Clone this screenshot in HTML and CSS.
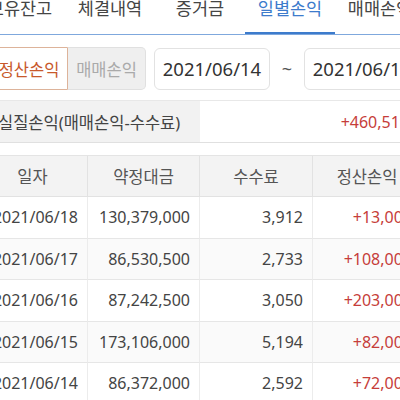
FILE: index.html
```html
<!DOCTYPE html>
<html lang="ko">
<head>
    <meta charset="UTF-8">
    <meta name="viewport" content="width=device-width, initial-scale=1.0">
    <title>일별손익</title>
    <link rel="stylesheet" href="styles.css">
</head>
<body>
    <div class="page">
        <!-- Tabs -->
        <div class="tabs">
            <div class="tab">보유잔고</div>
            <div class="tab">체결내역</div>
            <div class="tab">증거금</div>
            <div class="tab active">일별손익</div>
            <div class="tab">매매손익</div>
        </div>

        <!-- Filter -->
        <div class="filter-row">
            <div class="toggle">
                <div class="toggle-btn selected">정산손익</div>
                <div class="toggle-btn">매매손익</div>
            </div>
            <div class="date-box">2021/06/14</div>
            <div class="tilde">~</div>
            <div class="date-box">2021/06/18</div>
        </div>

        <!-- Summary -->
        <div class="summary">
            <div class="summary-label">실질손익(매매손익-수수료)</div>
            <div class="summary-value plus">+460,519</div>
        </div>

        <!-- Daily table -->
        <div class="data-grid">
            <div class="header">일자</div>
            <div class="header">약정대금</div>
            <div class="header">수수료</div>
            <div class="header">정산손익</div>

            <div class="data-row">
                <div class="data-cell">2021/06/18</div>
                <div class="data-cell">130,379,000</div>
                <div class="data-cell">3,912</div>
                <div class="data-cell plus">+13,000</div>
            </div>
            <div class="data-row alt">
                <div class="data-cell">2021/06/17</div>
                <div class="data-cell">86,530,500</div>
                <div class="data-cell">2,733</div>
                <div class="data-cell plus">+108,000</div>
            </div>
            <div class="data-row">
                <div class="data-cell">2021/06/16</div>
                <div class="data-cell">87,242,500</div>
                <div class="data-cell">3,050</div>
                <div class="data-cell plus">+203,000</div>
            </div>
            <div class="data-row alt">
                <div class="data-cell">2021/06/15</div>
                <div class="data-cell">173,106,000</div>
                <div class="data-cell">5,194</div>
                <div class="data-cell plus">+82,000</div>
            </div>
            <div class="data-row">
                <div class="data-cell">2021/06/14</div>
                <div class="data-cell">86,372,000</div>
                <div class="data-cell">2,592</div>
                <div class="data-cell plus">+72,000</div>
            </div>
        </div>
    </div>
</body>
</html>
```

FILE: styles.css
```css
body {
    font-family: "Noto Sans", "Noto Sans CJK KR", sans-serif;
    margin: 0;
    background: #fff;
    color: #444;
    overflow: hidden;
}
.page {
    width: 444px;
    margin-left: -22px;
}
.tabs {
    display: flex;
    margin: -2px 0 0 -3px;
    border-bottom: 1px solid #7fa8dd;
}
.tab {
    flex: 0 0 90px;
    text-align: center;
    font-size: 17.5px;
    line-height: 20px;
    padding-bottom: 14px;
    border-bottom: 2px solid transparent;
    color: #454545;
    white-space: nowrap;
}
.tab.active {
    color: #3d7bcc;
    border-bottom-color: #3d7bcc;
}
.filter-row {
    display: flex;
    align-items: center;
    margin: 12px 0 0 12px;
    height: 43px;
}
.toggle {
    display: flex;
    height: 43px;
}
.toggle-btn {
    width: 78px;
    box-sizing: border-box;
    display: flex;
    align-items: center;
    justify-content: center;
    font-size: 16.5px;
    color: #aaa;
    background: #efefef;
    border: 1px solid #e0e0e0;
    border-left: none;
    border-radius: 0 5px 5px 0;
}
.toggle-btn.selected {
    color: #c8592b;
    background: #fff;
    border: 1px solid #ddb39a;
    border-radius: 5px 0 0 5px;
}
.date-box {
    width: 116px;
    height: 42px;
    box-sizing: border-box;
    margin-left: 8px;
    display: flex;
    align-items: center;
    justify-content: center;
    font-size: 18.5px;
    color: #333;
    border: 1px solid #e2e2e2;
    border-radius: 6px;
}
.tilde {
    width: 18px;
    margin-left: 8px;
    font-size: 18px;
    color: #555;
    text-align: center;
}
.summary {
    display: grid;
    grid-template-columns: 222px 1fr;
    margin-top: 10px;
    height: 43px;
    border-top: 1px solid #e8e8e8;
    border-bottom: 1px solid #e0e0e0;
    box-sizing: border-box;
}
.summary-label {
    background: #f2f2f2;
    padding-left: 20px;
    display: flex;
    align-items: center;
    font-size: 16.5px;
    color: #444;
}
.summary-value {
    display: flex;
    align-items: center;
    justify-content: flex-end;
    padding-right: 13px;
    font-size: 16px;
}
.plus {
    color: #c63d3a;
}
.data-grid {
    display: grid;
    grid-template-columns: 110px 112px 113px 109px;
    margin-top: 12px;
    border-top: 1px solid #e4e4e4;
}
.header {
    background: #f3f3f3;
    height: 40px;
    display: flex;
    align-items: center;
    justify-content: center;
    font-size: 16.5px;
    color: #555;
    border-right: 1px solid #e2e2e2;
    border-bottom: 1px solid #e2e2e2;
}
.data-row {
    display: contents;
}
.data-cell {
    height: 41.5px;
    box-sizing: border-box;
    display: flex;
    align-items: center;
    justify-content: flex-end;
    padding-right: 9px;
    font-size: 16px;
    border-right: 1px solid #ececec;
    border-bottom: 1px solid #e6e6e6;
    background: #fff;
}
.data-row.alt .data-cell {
    background: #fafafa;
}
```
